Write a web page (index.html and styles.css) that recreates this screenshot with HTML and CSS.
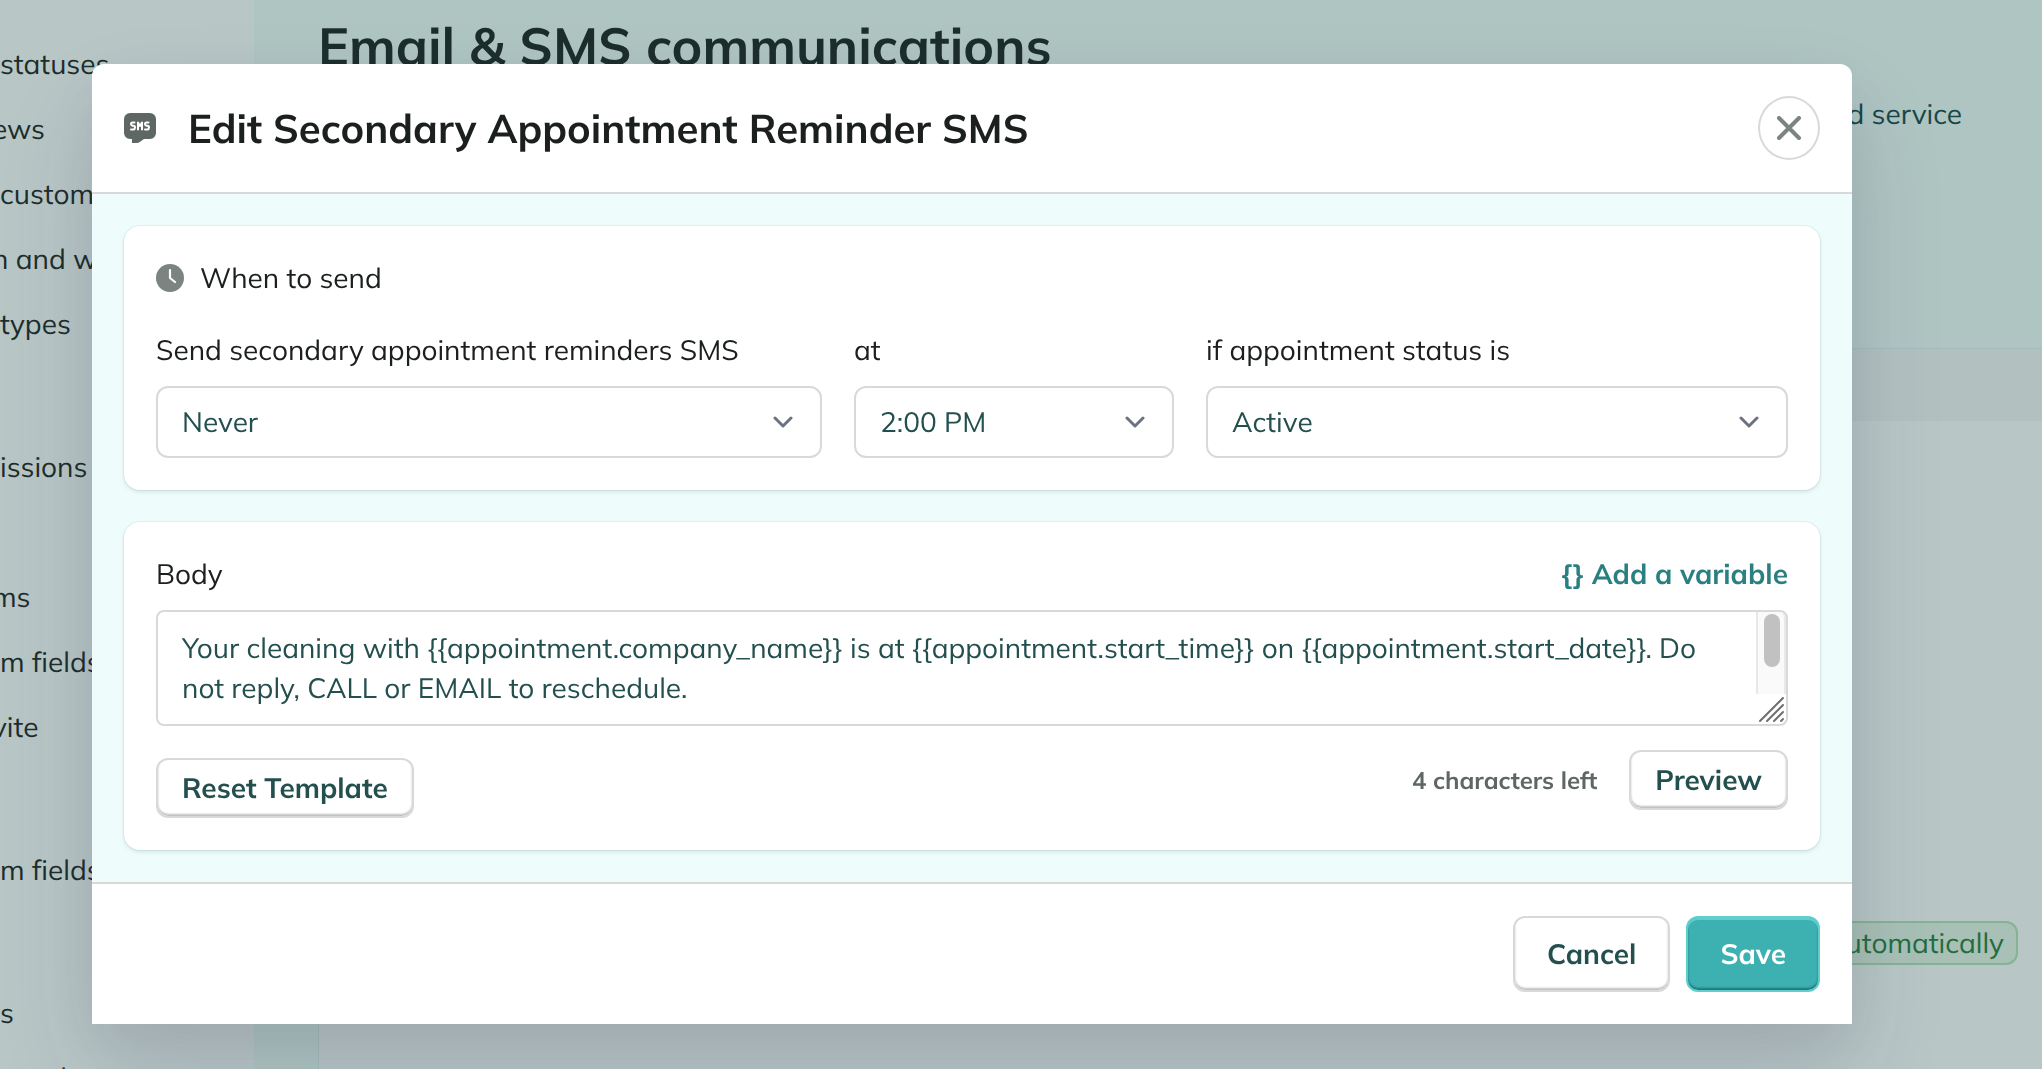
FILE: index.html
```
<!DOCTYPE html>
<html lang="en">
<head>
    <meta charset="UTF-8">
    <meta name="viewport" content="width=device-width, initial-scale=1.0">
    <title>Email &amp; SMS communications</title>
    <link rel="stylesheet" href="styles.css">
</head>
<body>
    <div class="page">
        <nav class="sidebar">
            <ul>
                <li><a href="#">statuses</a></li>
                <li class="cut"><a href="#">ews</a></li>
                <li><a href="#">custom</a></li>
                <li class="cut"><a href="#">n and w</a></li>
                <li><a href="#">types</a></li>
            </ul>
            <ul>
                <li><a href="#">issions</a></li>
                <li></li>
                <li class="cut"><a href="#">ms</a></li>
                <li><a href="#">m fields</a></li>
                <li class="cut"><a href="#">vite</a></li>
            </ul>
            <ul>
                <li><a href="#">m fields</a></li>
            </ul>
            <ul>
                <li><a href="#">s</a></li>
                <li class="cut"><a href="#">ontrols</a></li>
            </ul>
        </nav>
        <main class="content">
            <h1>Email &amp; SMS communications</h1>
            <p class="intro">d service</p>
            <section class="panel">
                <div class="panel-head"></div>
                <div class="panel-row"><span class="pill">utomatically</span></div>
            </section>
        </main>
    </div>

    <div class="overlay">
        <form class="modal" role="dialog" aria-labelledby="modal-title">
            <header class="modal-header">
                <svg class="sms-icon" viewBox="0 0 32 30" aria-hidden="true">
                    <path fill="#5f6764" d="M6 0h20a6 6 0 0 1 6 6v14a6 6 0 0 1-6 6h-6l-5 3.600q-1 .4-2 .4H8v-4H6a6 6 0 0 1-6-6V6a6 6 0 0 1 6-6z"/>
                    <g fill="none" stroke="#fff" stroke-width="2" stroke-linecap="round" stroke-linejoin="round">
                        <path d="M10.500 9.500H8.600Q7 9.500 7 11T8.600 12.800H9.400Q11 12.800 11 14.500T9.400 16.500H7"/>
                        <path d="M14 16.500V9.500L16 13L18 9.500V16.500"/>
                        <path d="M24.500 9.500H22.600Q21 9.500 21 11T22.600 12.800H23.400Q25 12.800 25 14.500T23.400 16.500H21"/>
                    </g>
                </svg>
                <h2 id="modal-title">Edit Secondary Appointment Reminder SMS</h2>
                <button type="button" class="close" aria-label="Close">
                    <svg viewBox="0 0 24 24" aria-hidden="true"><path d="M2 2L22 22M22 2L2 22"/></svg>
                </button>
            </header>

            <div class="modal-body">
                <section class="card">
                    <h3>
                        <svg class="clock-icon" viewBox="0 0 28 28" aria-hidden="true">
                            <circle cx="14" cy="14" r="14" fill="#7c8481"/>
                            <path d="M14 6V14L19 18" fill="none" stroke="#fff" stroke-width="2.200" stroke-linecap="round" stroke-linejoin="round"/>
                        </svg>
                        When to send
                    </h3>
                    <div class="fields">
                        <div class="field">
                            <label for="send">Send secondary appointment reminders SMS</label>
                            <div class="select">
                                <select id="send"><option>Never</option></select>
                                <svg viewBox="0 0 20 12" aria-hidden="true"><path d="M2 2L10 10L18 2"/></svg>
                            </div>
                        </div>
                        <div class="field">
                            <label for="time">at</label>
                            <div class="select">
                                <select id="time"><option>2:00 PM</option></select>
                                <svg viewBox="0 0 20 12" aria-hidden="true"><path d="M2 2L10 10L18 2"/></svg>
                            </div>
                        </div>
                        <div class="field">
                            <label for="status">if appointment status is</label>
                            <div class="select">
                                <select id="status"><option>Active</option></select>
                                <svg viewBox="0 0 20 12" aria-hidden="true"><path d="M2 2L10 10L18 2"/></svg>
                            </div>
                        </div>
                    </div>
                </section>

                <section class="card">
                    <div class="body-head">
                        <label for="body">Body</label>
                        <a href="#">{} Add a variable</a>
                    </div>
                    <div class="editor">
                        <textarea id="body" spellcheck="false">Your cleaning with {{appointment.company_name}} is at {{appointment.start_time}} on {{appointment.start_date}}. Do not reply, CALL or EMAIL to reschedule.</textarea>
                        <div class="scrollbar">
                            <div class="track"><div class="thumb"></div></div>
                            <svg viewBox="0 0 30 30" aria-hidden="true"><path d="M4 27L27 4M11 27L27 11M18 27L27 18M25 27L27 25"/></svg>
                        </div>
                    </div>
                    <div class="body-actions">
                        <button type="button" class="btn reset">Reset Template</button>
                        <span class="count">4 characters left</span>
                        <button type="button" class="btn">Preview</button>
                    </div>
                </section>
            </div>

            <footer class="modal-footer">
                <button type="button" class="btn large">Cancel</button>
                <button type="submit" class="btn large primary">Save</button>
            </footer>
        </form>
    </div>
</body>
</html>
```
FILE: styles.css
```
* {
    box-sizing: border-box;
}

body {
    margin: 0;
    height: 100vh;
    overflow: hidden;
    font-family: Mulish, Lato, sans-serif;
    font-size: 28px;
    line-height: 40px;
    font-variant-ligatures: none;
    text-rendering: geometricPrecision;
    color: #1b201e;
    background: #b8c6c6;
}

h1, h2, h3, p, ul {
    margin: 0;
    padding: 0;
}

button, select, textarea {
    font: inherit;
    text-rendering: inherit;
}

/* Page behind the modal */
.page {
    display: flex;
    height: 100vh;
}

.sidebar {
    width: 254px;
    padding-top: 31px;
    overflow: hidden;
}

.sidebar ul {
    list-style: none;
    margin-bottom: 78px;
}

.sidebar ul:last-child {
    margin-bottom: 0;
}

.sidebar li {
    height: 65px;
    line-height: 65px;
}

.sidebar .cut {
    margin-left: -8px;
}

.sidebar a {
    color: #1c2e2c;
    text-decoration: none;
}

.content {
    display: flex;
    flex: 1;
    flex-direction: column;
    padding: 12px 0 0 64px;
    background: #afc5c2;
}

.content h1 {
    font-size: 52px;
    line-height: 68px;
    color: #1c2e2c;
}

.intro {
    padding: 14px 80px 0 0;
    text-align: right;
    color: #17474a;
}

.panel {
    flex: 1;
    margin-top: 214px;
    border-top: 1px solid #a3bcbe;
    border-left: 1px solid #a3bcbe;
    background: #b8c6c6;
}

.panel-head {
    height: 72px;
    background: #b2c0c0;
}

.panel-row {
    display: flex;
    justify-content: flex-end;
    padding: 500px 24px 0 0;
}

.pill {
    padding: 0 12px;
    border: 2px solid #86b295;
    border-radius: 12px;
    background: #a8c0b6;
    color: #236c40;
}

/* Modal */
.overlay {
    position: fixed;
    inset: 0;
    padding: 64px 190px 0 92px;
}

.modal {
    border-radius: 12px 12px 0 0;
    background: #fff;
    box-shadow: 0 50px 100px rgba(50, 50, 93, 0.12), 0 20px 60px rgba(0, 0, 0, 0.08);
}

.modal-header {
    display: flex;
    align-items: center;
    padding: 32px;
    border-bottom: 2px solid #d8d9d9;
}

.sms-icon {
    width: 32px;
    height: 30px;
    margin-right: 32px;
}

.modal-header h2 {
    flex: 1;
    font-size: 40px;
    line-height: 48px;
}

.close {
    display: flex;
    align-items: center;
    justify-content: center;
    width: 62px;
    height: 64px;
    padding: 0;
    border: 2px solid #d8d9d9;
    border-radius: 50%;
    background: #fff;
}

.close svg {
    width: 24px;
    height: 24px;
    fill: none;
    stroke: #7c8481;
    stroke-width: 4;
    stroke-linecap: round;
}

.modal-body {
    display: flex;
    flex-direction: column;
    gap: 32px;
    padding: 32px;
    background: #effcfc;
}

.card {
    padding: 32px;
    border-radius: 16px;
    background: #fff;
    box-shadow: 0 0 0 1px rgba(0, 60, 60, 0.05), 0 2px 4px rgba(0, 60, 60, 0.12);
}

.card h3 {
    display: flex;
    align-items: center;
    gap: 16px;
    margin-bottom: 32px;
    font-size: 28px;
    font-weight: 400;
}

.clock-icon {
    width: 28px;
    height: 28px;
}

.fields {
    display: grid;
    grid-template-columns: 666fr 320fr 582fr;
    gap: 32px;
}

.field label {
    display: block;
    margin-bottom: 16px;
}

.select {
    position: relative;
}

.select select {
    display: block;
    width: 100%;
    height: 72px;
    padding: 0 24px;
    border: 2px solid #d8d9d9;
    border-radius: 12px;
    background: #fff;
    color: #244f4f;
    appearance: none;
}

.select svg {
    position: absolute;
    top: 30px;
    right: 29px;
    width: 20px;
    height: 12px;
    fill: none;
    stroke: #6b7280;
    stroke-width: 3;
    stroke-linecap: round;
    stroke-linejoin: round;
    pointer-events: none;
}

.body-head {
    display: flex;
    justify-content: space-between;
    margin-bottom: 16px;
}

.body-head a {
    font-weight: 700;
    color: #2a7f80;
    text-decoration: none;
}

.editor {
    position: relative;
}

textarea {
    display: block;
    width: 100%;
    height: 116px;
    padding: 16px 56px 16px 24px;
    border: 2px solid #d8d9d9;
    border-radius: 8px;
    background: #fff;
    color: #244f4f;
    resize: none;
}

/* Scrollbar and resize grip laid over the right edge of the textarea */
.scrollbar {
    position: absolute;
    top: 2px;
    right: 2px;
    bottom: 2px;
    display: flex;
    flex-direction: column;
    width: 30px;
    pointer-events: none;
}

.track {
    flex: 1;
    padding: 2px 6px;
    border: solid #e8e8e8;
    border-width: 0 2px;
    border-top-right-radius: 6px;
    background: #fafafa;
}

.thumb {
    width: 16px;
    height: 53px;
    border-radius: 8px;
    background: #c1c1c1;
}

.scrollbar svg {
    width: 30px;
    height: 30px;
    fill: none;
    stroke: #6e6e6e;
    stroke-width: 2;
    stroke-linecap: round;
}

.body-actions {
    display: flex;
    align-items: flex-start;
    gap: 32px;
    padding-top: 24px;
}

.btn {
    height: 60px;
    padding: 0 24px;
    border: 2px solid #d8d9d9;
    border-radius: 12px;
    background: #fff;
    box-shadow: inset 0 -2px 2px rgba(0, 0, 0, 0.25);
    font-weight: 700;
    color: #244f4f;
}

.reset {
    margin: 8px auto 0 0;
}

.count {
    font-size: 24px;
    font-weight: 700;
    line-height: 60px;
    color: #5f6764;
}

.modal-footer {
    display: flex;
    justify-content: flex-end;
    gap: 16px;
    padding: 32px;
    border-top: 2px solid #d8d9d9;
}

.large {
    height: 76px;
    padding: 0 32px;
}

.primary {
    border-color: #5fcfce;
    background: #3db0b2;
    box-shadow: inset 0 2px 0 #5fcfce, inset 0 -2px 2px rgba(0, 60, 70, 0.5);
    color: #fff;
}
```
